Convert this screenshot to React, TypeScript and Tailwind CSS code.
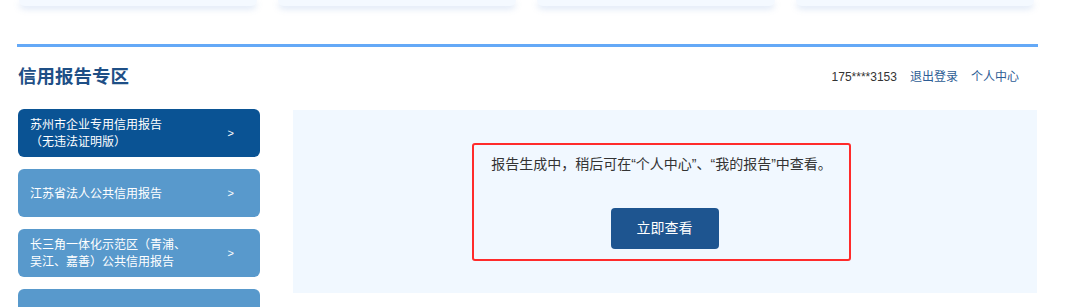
const cjk = "font-['Liberation_Sans','Noto_Sans_CJK_SC',sans-serif]";

const menu = [
  { lines: ["苏州市企业专用信用报告", "（无违法证明版）"], active: true },
  { lines: ["江苏省法人公共信用报告"], active: false },
  { lines: ["长三角一体化示范区（青浦、", "吴江、嘉善）公共信用报告"], active: false },
  { lines: [""], active: false },
];

function TopCards() {
  return (
    <div className="flex gap-[21px] pl-[1px]">
      {[0, 1, 2, 3].map((i) => (
        <div
          key={i}
          className="h-[6px] w-[238px] rounded-b-[8px] bg-[#f4f9ff] shadow-[0_3px_6px_rgba(120,160,220,0.25)]"
        />
      ))}
    </div>
  );
}

function MenuItem({ lines, active }: { lines: string[]; active: boolean }) {
  return (
    <div
      className={
        "flex h-[48px] w-[242px] items-center justify-between rounded-[6px] pl-[12px] pr-[26px] text-[12px] leading-[17px] text-white " +
        (active ? "bg-[#0a5394]" : "bg-[#5899cc]")
      }
    >
      <div className="mt-[2px] flex flex-col">
        {lines.map((l, i) => (
          <span key={i}>{l}</span>
        ))}
      </div>
      {lines[0] && <span className="text-[11px] leading-none">&gt;</span>}
    </div>
  );
}

export default function App() {
  return (
    <div className={`h-[307px] w-[1080px] overflow-hidden bg-white ${cjk}`}>
      <div className="ml-[18px] w-[1019px]">
        <TopCards />
        <div className="-ml-[1px] mt-[38px] h-[3px] w-[1021px] bg-[#64a9f7]" />
        <div className="flex h-[60px] items-center justify-between">
          <h2 className="text-[18.5px] font-bold leading-none text-[#1e4f86]">
            信用报告专区
          </h2>
          <div className="mr-[18px] flex items-center gap-[13px] text-[12px] leading-none">
            <span className="text-[#333333]">175****3153</span>
            <span className="text-[#2d5d95]">退出登录</span>
            <span className="text-[#2d5d95]">个人中心</span>
          </div>
        </div>
        <div className="mt-[2px] flex gap-[33px]">
          <div className="flex flex-col gap-[12px]">
            {menu.map((m, i) => (
              <MenuItem key={i} lines={m.lines} active={m.active} />
            ))}
          </div>
          <div className="mt-[1px] flex h-[183px] w-[744px] items-center justify-center bg-[#f1f8ff]">
            <div className="-ml-[7px] flex flex-col items-center rounded-[3px] border-2 border-[#ff2b2b] px-[17px] pb-[10px] pt-[8px]">
              <p className="text-[14px] leading-[22px] text-[#333333]">
                报告生成中，稍后可在“个人中心”、“我的报告”中查看。
              </p>
              <button className="ml-[6px] mt-[33px] h-[41px] w-[108px] rounded-[4px] bg-[#1e5590] text-[14px] text-white">
                立即查看
              </button>
            </div>
          </div>
        </div>
      </div>
    </div>
  );
}
